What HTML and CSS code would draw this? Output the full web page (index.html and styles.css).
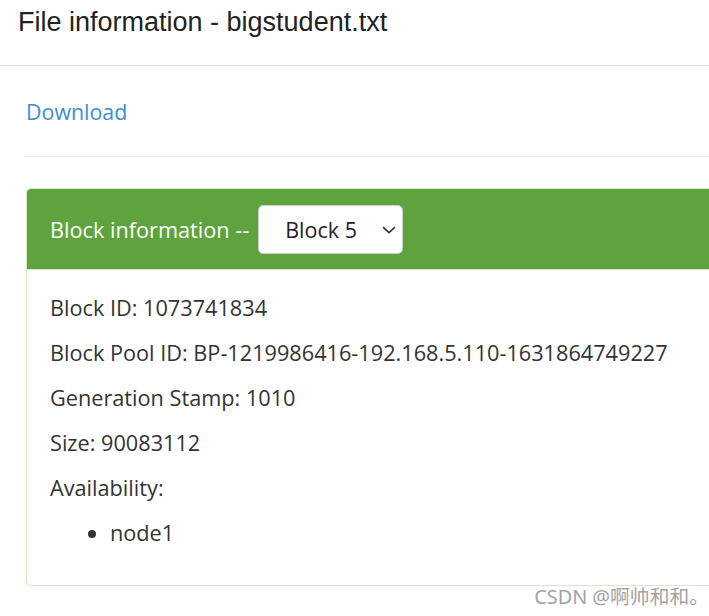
FILE: index.html
```html
<!DOCTYPE html>
<html>
<head>
<meta charset="utf-8">
<link rel="stylesheet" href="styles.css">
</head>
<body>
<div class="modal">
  <div class="modal-header">
    <h4 class="modal-title">File information - bigstudent.txt</h4>
  </div>
  <div class="modal-body">
    <div class="download-row"><a class="download" href="#">Download</a></div>
    <hr class="divider">
    <div class="panel">
      <div class="panel-heading">
        <span class="panel-title">Block information --</span>
        <div class="select">
          <span class="select-text">Block 5</span>
          <svg class="chevron" width="14" height="8" viewBox="0 0 14 8"><path d="M1 1.2 L7 6.6 L13 1.2" fill="none" stroke="#333" stroke-width="1.6"/></svg>
        </div>
      </div>
      <div class="panel-body">
        <p class="line">Block ID: 1073741834</p>
        <p class="line">Block Pool ID: BP-1219986416-192.168.5.110-1631864749227</p>
        <p class="line">Generation Stamp: 1010</p>
        <p class="line">Size: 90083112</p>
        <p class="line">Availability:</p>
        <ul class="nodes">
          <li class="node">node1</li>
        </ul>
      </div>
    </div>
  </div>
</div>
<div class="watermark">CSDN @啊帅和和。</div>
</body>
</html>
```
FILE: styles.css
```css
html, body {
  margin: 0;
  padding: 0;
  overflow: hidden;
  background: #fff;
}
body {
  width: 709px;
  height: 616px;
  position: relative;
  font-family: "Open Sans", "Noto Sans", sans-serif;
  color: #333;
}
.modal {
  width: 900px;
}
.modal-header {
  padding: 7px 18px 28px;
  border-bottom: 1px solid #e5e5e5;
}
.modal-title {
  margin: 0;
  font-family: "Liberation Sans", Arial, sans-serif;
  font-weight: normal;
  font-size: 27px;
  line-height: 30px;
  color: #222;
}
.modal-body {
  padding: 0 0 0 25px;
}
.download-row {
  height: 90px;
  display: flex;
  align-items: center;
  padding-left: 1px;
}
.download {
  font-size: 21.4px;
  color: #3e8dd0;
  text-decoration: none;
}
.divider {
  margin: 0;
  border: 0;
  border-top: 1px solid #eaeaea;
}
.panel {
  margin-top: 31px;
  margin-left: 1px;
  border: 1px solid #d6e9c6;
  border-radius: 5px;
  overflow: hidden;
}
.panel-heading {
  background: #5fa33e;
  height: 80px;
  border-bottom: 1px solid #d6e9c6;
  display: flex;
  align-items: center;
  padding-left: 23px;
  color: #fff;
}
.panel-title {
  font-size: 21.7px;
  margin-right: 9px;
}
.select {
  width: 145px;
  height: 49px;
  box-sizing: border-box;
  background: #fff;
  border: 1px solid #ccc;
  border-radius: 5px;
  display: flex;
  align-items: center;
  padding: 0 6px 0 26px;
  color: #222;
  margin-top: 1px;
}
.select-text {
  font-size: 21.5px;
  flex: 1;
}
.chevron {
  display: block;
}
.panel-body {
  padding: 15px 23px 30px;
}
.line {
  margin: 0;
  font-size: 21.7px;
  line-height: 45px;
}
.nodes {
  margin: 0;
  padding-left: 60px;
}
.node {
  font-size: 21.7px;
  line-height: 45px;
}
.watermark {
  position: absolute;
  right: 0;
  bottom: 6px;
  font-family: "Noto Sans", "Noto Sans CJK SC", sans-serif;
  font-size: 19.8px;
  color: #a3a3a3;
}
```
